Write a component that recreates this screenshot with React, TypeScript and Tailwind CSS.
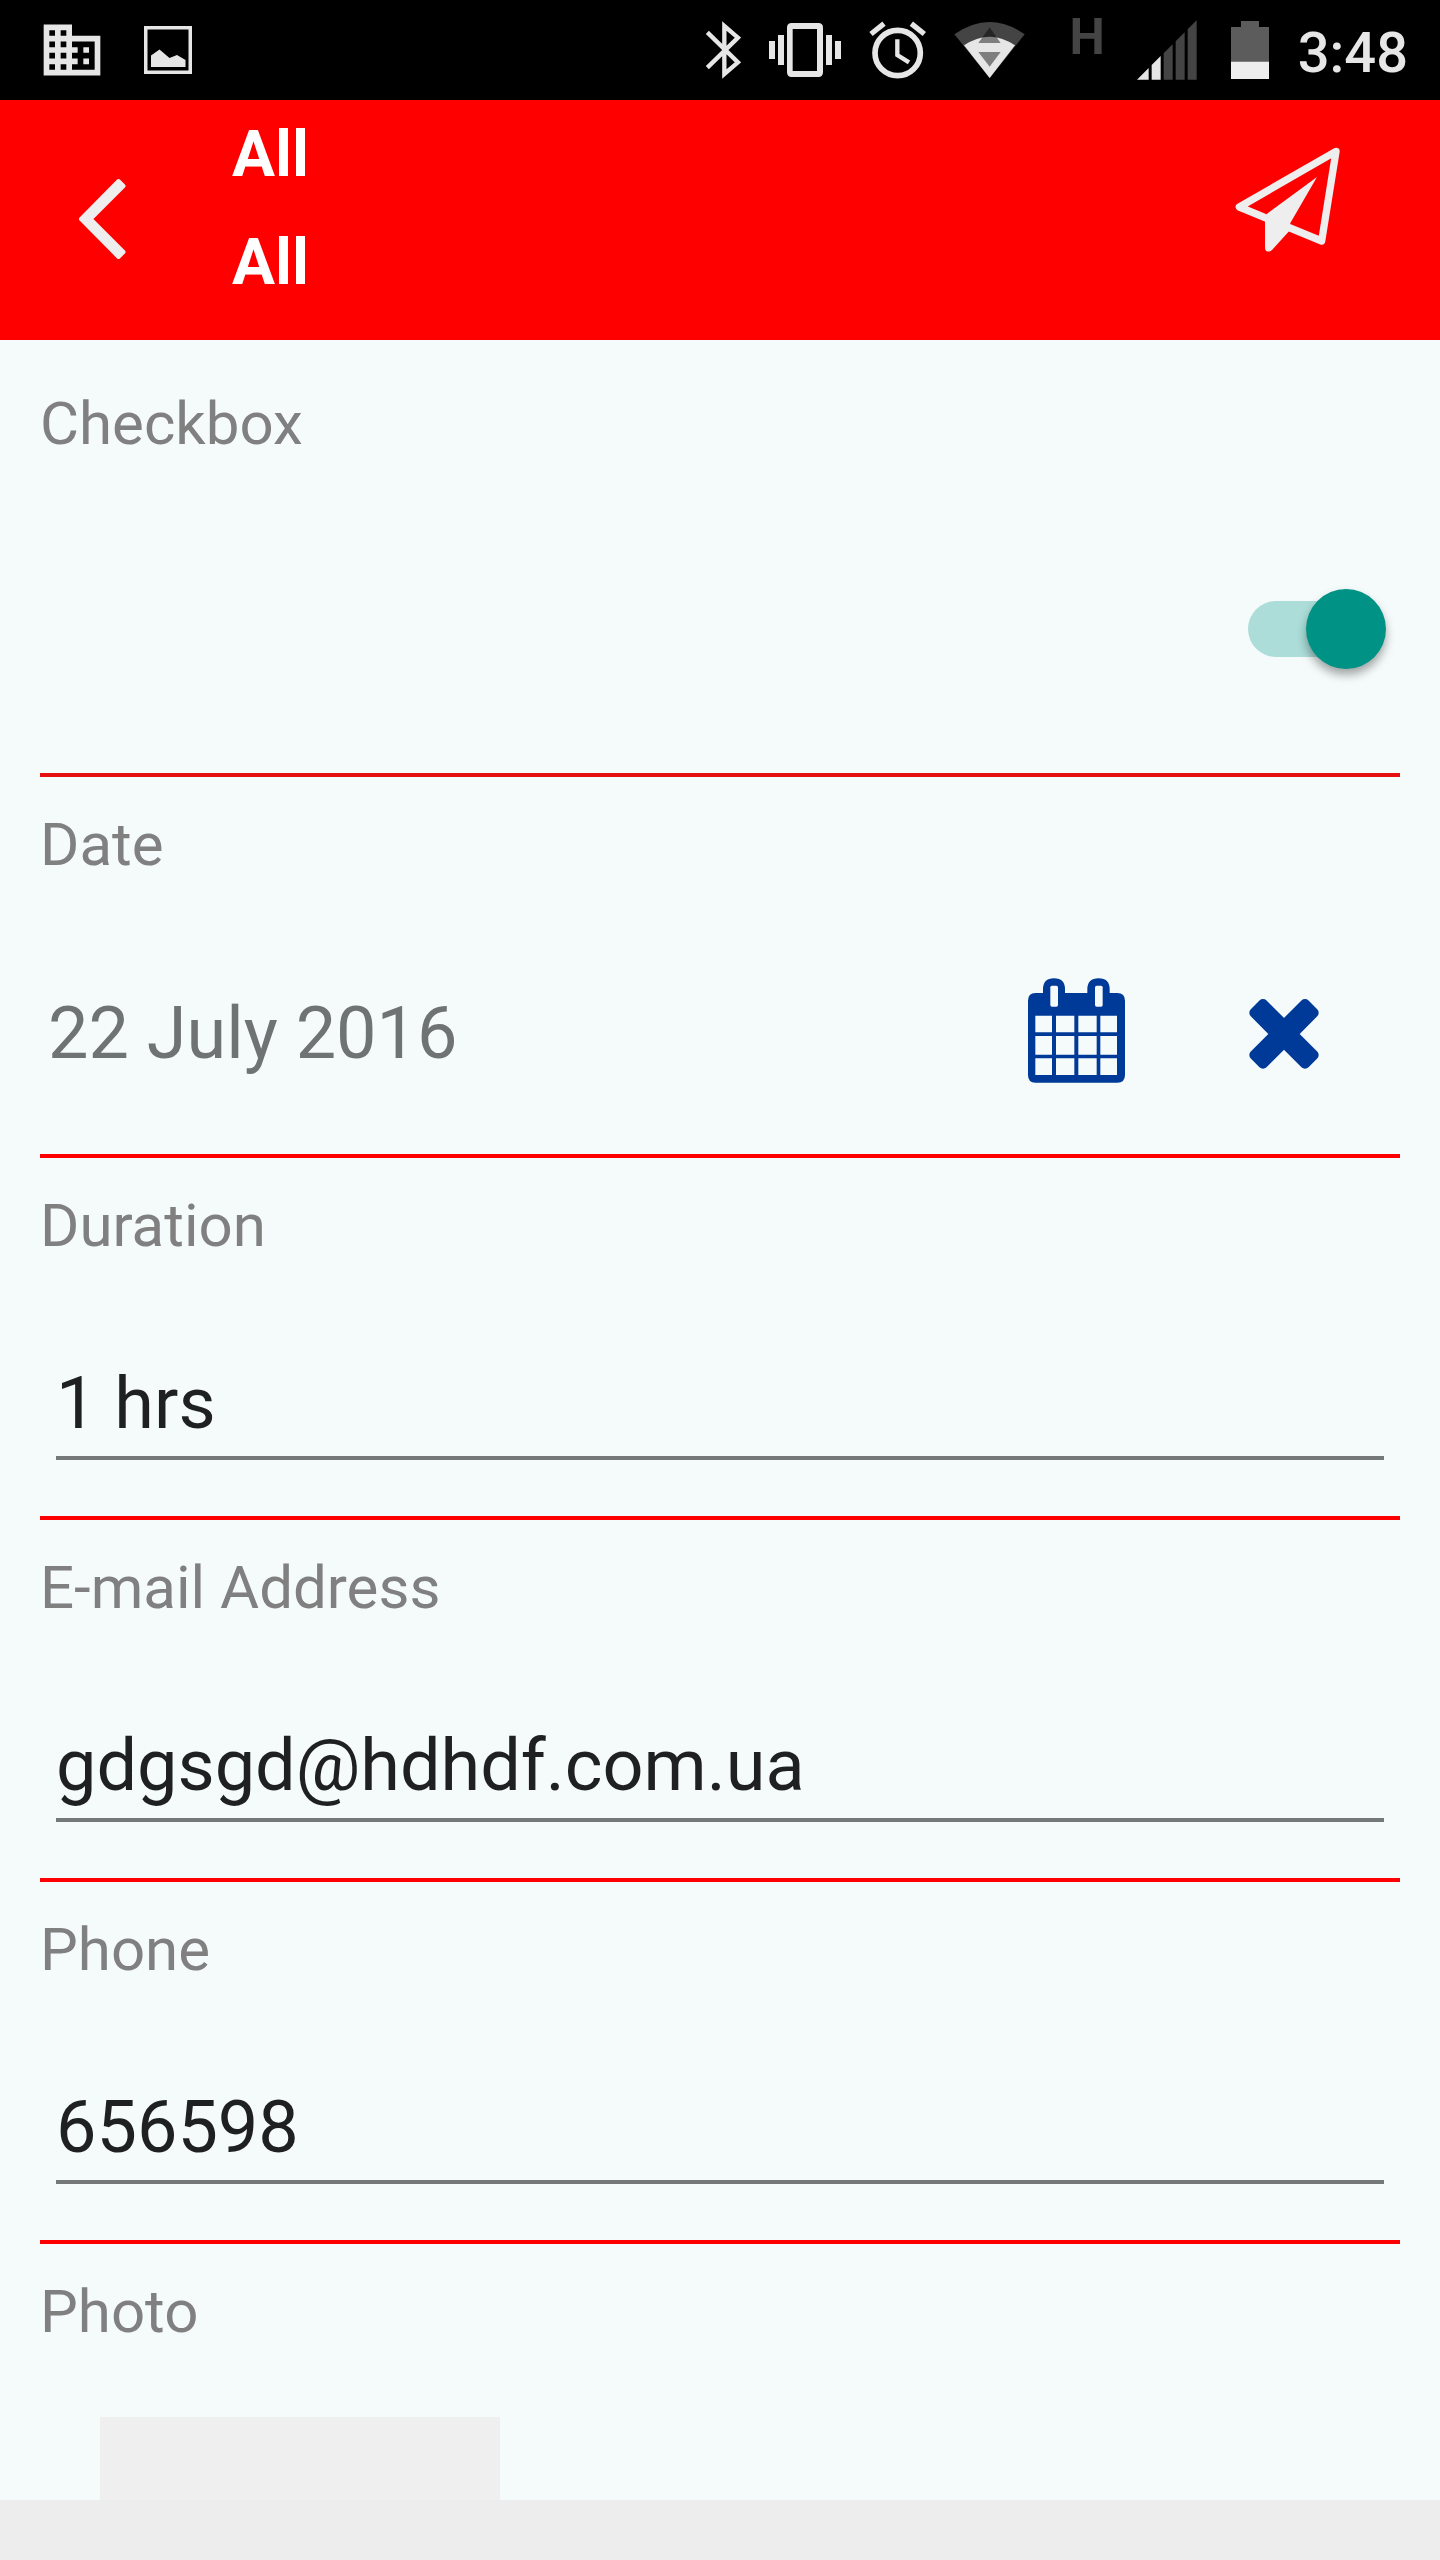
import React, { useState } from 'react';
import { MdBusiness } from 'react-icons/md';

const StatusBar: React.FC = () => (
  <div className="flex h-25 items-center bg-black pl-[38px] pr-8 text-[#e6e6e6]">
    <MdBusiness size={68} />
    <svg className="ml-[38px] h-12 w-12" viewBox="0 0 48 48" fill="currentColor">
      <path fillRule="evenodd" d="M0 0H48V48H0ZM3.5 3.5V44.500H44.500V3.500Z" />
      <path d="M7 29.500L15.500 23.500L25.500 32L33 29L41.500 34V41H7Z" />
    </svg>

    <div className="ml-auto flex h-full items-center">
      {/* Bluetooth */}
      <svg className="h-[58px] w-9" viewBox="75 63 108 174" fill="none" stroke="currentColor" strokeWidth="13">
        <path d="M82 97L174 187L133 222V78L174 113L82 203" />
      </svg>
      {/* Vibrate */}
      <svg className="ml-7 h-[54px] w-[72px]" viewBox="273 69 216 162" fill="currentColor">
        <path d="M273 123h18v54h-18zM300 105h18v90h-18zM444 105h18v90h-18zM471 123h18v54h-18z" />
        <path
          fillRule="evenodd"
          d="M341 69H421Q435 69 435 83V217Q435 231 421 231H341Q327 231 327 217V83Q327 69 341 69ZM344 87V213H417V87Z"
        />
      </svg>
      {/* Alarm */}
      <svg className="ml-7 h-[58px] w-[57px]" viewBox="571 62 171 174" fill="none" stroke="currentColor">
        <circle cx="657" cy="158" r="68" strokeWidth="17" />
        <path d="M656 117V164L691 186" strokeWidth="13" />
        <path d="M577 101L616 70M698 70L737 101" strokeWidth="16" />
      </svg>
      {/* Wifi */}
      <svg className="ml-7 h-[58px] w-[71px]" viewBox="822 63 213 174">
        <path d="M929 234L823 103Q929 29 1034 103Z" fill="#444444" />
        <path d="M929 234L852 136Q929 84 1005 136Z" fill="currentColor" />
        <path d="M929 82L962 129H895ZM895 156H962L929 200Z" fill="#000000" fillOpacity="0.45" />
      </svg>
      <span className="ml-11 mt-3 self-start text-[50px] font-bold leading-none text-[#444444]">H</span>
      {/* Signal */}
      <svg className="ml-8 h-[60px] w-[60px]" viewBox="232 61 180 180">
        <path d="M232 240L267 205V240ZM276 240V196L303 169V240Z" fill="currentColor" />
        <path d="M312 240V161L339 134V240ZM348 240V125L375 98V240ZM384 240V89L411 62V240Z" fill="#444444" />
      </svg>
      {/* Battery */}
      <svg className="ml-[34px] h-[58px] w-[38px]" viewBox="513 63 114 174">
        <path d="M513 81H543V63H597V81H627V186H513Z" fill="#5c5c5c" />
        <path d="M513 185H627V237H513Z" fill="#eeeeee" />
      </svg>
      <span className="ml-[29px] pt-1.5 text-[56px] font-medium leading-none">3:48</span>
    </div>
  </div>
);

const Header: React.FC = () => (
  <header className="flex items-start bg-[#ff0000] pb-[23px] pl-[78px] pr-[98px]">
    <button type="button" aria-label="Back" className="mt-[78px]">
      <svg className="h-[82px] w-12" viewBox="78 177.500 48 82" fill="#eeeeee" stroke="#eeeeee" strokeWidth="4" strokeLinejoin="round">
        <path d="M81 218.500L118.500 180.500L123.500 185.500L90.500 218.500L123.500 251.500L118.500 256.500Z" />
      </svg>
    </button>
    <div className="ml-[106px] flex-1 pt-px text-[64px] font-bold leading-[108px] text-white">
      <h1>All</h1>
      <h2>All</h2>
    </div>
    <button type="button" aria-label="Send" className="mt-[45px]">
      <svg className="h-[109px] w-[109px]" viewBox="520 436 327 327">
        <path d="M829 455L539 622L786 724Z" fill="none" stroke="#eeeeee" strokeWidth="22" strokeLinejoin="round" />
        <path d="M772 532L692 670L688 695L637 751Q628 759 619 753Q616 750 616 744V662L622 642Z" fill="#eeeeee" />
      </svg>
    </button>
  </header>
);

const labelClass = 'block text-[60px] leading-[72px] text-[#808080]';

type TextFieldProps = {
  id: string;
  label: string;
  type: string;
  initial: string;
};

const TextField: React.FC<TextFieldProps> = ({ id, label, type, initial }) => {
  const [value, setValue] = useState(initial);

  return (
    <section className="border-b-4 border-[#ff0000] pb-14 pt-8">
      <label htmlFor={id} className={labelClass}>{label}</label>
      <div className="mt-[99px] px-4">
        <input
          id={id}
          type={type}
          value={value}
          onChange={(e) => setValue(e.target.value)}
          className="block h-[99px] w-full border-b-4 border-[#747878] pb-[11px] text-[72px] leading-[84px] text-[#1e2021] outline-none"
        />
      </div>
    </section>
  );
};

const CalendarIcon: React.FC = () => (
  <svg className="h-[105px] w-[97px]" viewBox="144 113 291 313">
    <path
      fill="#003a98"
      d="M166 157H189V146Q189 113 222 113Q255 113 255 146V157H322V146Q322 113 356 113Q389 113 389 146V157H412Q435 157 435 180V403Q435 426 412 426H166Q144 426 144 403V180Q144 157 166 157Z"
    />
    <g fill="#f5fbfb">
      <rect x="211" y="135" width="23" height="63" rx="5" />
      <rect x="345" y="135" width="23" height="63" rx="5" />
      <path d="M166 225h50v50h-50zM228 225h55v50h-55zM295 225h55v50h-55zM361 225h50v50h-50z" />
      <path d="M166 286h50v56h-50zM228 286h55v56h-55zM295 286h55v56h-55zM361 286h50v56h-50z" />
      <path d="M166 353h50v50h-50zM228 353h55v50h-55zM295 353h55v50h-55zM361 353h50v50h-50z" />
    </g>
  </svg>
);

const ClearIcon: React.FC = () => (
  <svg className="h-[70px] w-[70px]" viewBox="807 176 210 210" fill="#003a98" stroke="#003a98" strokeWidth="30" strokeLinejoin="round">
    <path d="M849 191L912 254L975 191L1001 217L938 281L1001 344L975 370L912 307L849 370L823 344L886 281L823 217Z" />
  </svg>
);

const App: React.FC = () => {
  const [checked, setChecked] = useState(true);
  const [date, setDate] = useState('22 July 2016');

  return (
    <div className="flex min-h-screen flex-col bg-[#f5fbfb] font-[Roboto,sans-serif]">
      <StatusBar />
      <Header />

      <main className="flex flex-1 flex-col px-10 pt-4">
        <section className="border-b-4 border-[#e60f11] pb-[104px] pt-8">
          <label htmlFor="checkbox" className={labelClass}>Checkbox</label>
          <div className="mt-[129px] flex justify-end pr-3.5">
            <input
              id="checkbox"
              type="checkbox"
              role="switch"
              checked={checked}
              onChange={(e) => setChecked(e.target.checked)}
              className="relative h-20 w-[138px] appearance-none before:absolute before:left-0 before:top-3 before:h-14 before:w-32 before:rounded-full before:bg-[#c4c8c8] after:absolute after:left-0 after:top-0 after:size-20 after:rounded-full after:bg-[#f1f1f1] after:shadow-[0_6px_10px_rgba(0,0,0,0.35)] checked:before:bg-[#acddd9] checked:after:left-[58px] checked:after:bg-[#009385]"
            />
          </div>
        </section>

        <section className="border-b-4 border-[#ff0000] pb-[66px] pt-8">
          <h3 className={labelClass}>Date</h3>
          <div className="mt-[99px] flex h-27 items-center pl-2 pr-[81px]">
            <span className="flex-1 text-[72px] leading-[84px] text-[#6f7373]">{date}</span>
            <button type="button" aria-label="Pick a date" className="pb-2" onClick={() => setDate('22 July 2016')}>
              <CalendarIcon />
            </button>
            <button type="button" aria-label="Clear date" className="ml-31" onClick={() => setDate('')}>
              <ClearIcon />
            </button>
          </div>
        </section>

        <TextField id="duration" label="Duration" type="text" initial="1 hrs" />
        <TextField id="email" label="E-mail Address" type="email" initial="gdgsgd@hdhdf.com.ua" />
        <TextField id="phone" label="Phone" type="tel" initial="656598" />

        <section className="flex flex-1 flex-col pt-8">
          <h3 className={labelClass}>Photo</h3>
          <div className="ml-15 mt-[69px] min-h-20 w-[400px] flex-1 bg-[#efefef]" />
        </section>
      </main>

      <footer className="h-15 bg-[#ededed]" />
    </div>
  );
};

export default App;
